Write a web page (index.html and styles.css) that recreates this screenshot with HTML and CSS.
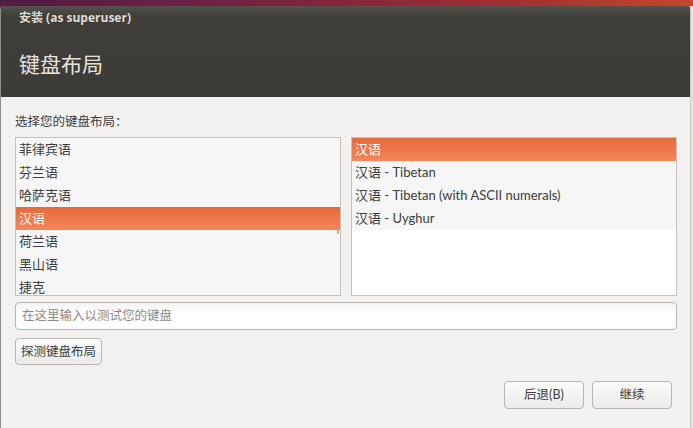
FILE: index.html
```html
<!DOCTYPE html>
<html lang="zh-CN">
<head>
<meta charset="utf-8">
<link rel="stylesheet" href="styles.css">
</head>
<body>
<div class="desktop">
  <div class="window">
    <div class="titlebar">
      <div class="wm-title">安装 (as superuser)</div>
      <h1 class="page-title">键盘布局</h1>
    </div>
    <div class="content">
      <div class="label">选择您的键盘布局：</div>
      <div class="lists">
        <div class="list list-left">
          <div class="row">菲律宾语</div>
          <div class="row">芬兰语</div>
          <div class="row">哈萨克语</div>
          <div class="row selected">汉语</div>
          <div class="row">荷兰语</div>
          <div class="row">黑山语</div>
          <div class="row">捷克</div>
          <div class="scroll-ind"></div>
        </div>
        <div class="list">
          <div class="row selected">汉语</div>
          <div class="row">汉语 - Tibetan</div>
          <div class="row">汉语 - Tibetan (with ASCII numerals)</div>
          <div class="row">汉语 - Uyghur</div>
        </div>
      </div>
      <div class="entry">在这里输入以测试您的键盘</div>
      <div class="detect-row"><div class="btn">探测键盘布局</div></div>
      <div class="actions">
        <div class="btn wide">后退(B)</div>
        <div class="btn wide">继续</div>
      </div>
    </div>
  </div>
  <div class="side"></div>
</div>
</body>
</html>
```
FILE: styles.css
```css
html, body {
  margin: 0;
  padding: 0;
  width: 693px;
  height: 428px;
  overflow: hidden;
  font-family: "Lato", "Noto Sans CJK SC", sans-serif;
  color: #3c3c3c;
}
.desktop {
  display: flex;
  height: 428px;
  padding-top: 6px;
  box-sizing: border-box;
  background: linear-gradient(90deg, #4e1c45 0%, #7a2340 40%, #a3302f 75%, #c4482c 100%);
}
.window {
  width: 690px;
  display: flex;
  flex-direction: column;
  border-left: 1px solid #8f8d89;
  box-sizing: border-box;
  border-radius: 4px 4px 0 0;
  overflow: hidden;
}
.side {
  width: 3px;
  background: #e4e2df;
  border-left: 1px solid #c9c7c4;
  box-sizing: border-box;
}
.titlebar {
  height: 91px;
  background: linear-gradient(180deg, #55524c 0px, #3f3e3a 10px, #3c3b37 100%);
  color: #dfdbd2;
  padding-left: 18px;
  box-sizing: border-box;
}
.wm-title {
  font-family: "Open Sans", "Noto Sans CJK SC", sans-serif;
  font-size: 12px;
  font-weight: bold;
  line-height: 14px;
  padding-top: 5px;
  color: #dfdbd2;
}
.page-title {
  margin: 0;
  margin-top: 26px;
  font-size: 21px;
  font-weight: normal;
  line-height: 26px;
  color: #e6e3dd;
}
.content {
  flex: 1;
  background: #f2f1f0;
  padding: 17px 13px 0 14px;
  display: flex;
  flex-direction: column;
}
.label {
  font-size: 12.5px;
  line-height: 16px;
  color: #3c3c3c;
}
.lists {
  display: flex;
  gap: 10px;
  margin-top: 7px;
}
.list {
  position: relative;
  flex: 1;
  height: 159px;
  border: 1px solid #c6c3bf;
  background: #ffffff;
  overflow: hidden;
  box-sizing: border-box;
}
.list-left {
  background: #f6f6f6;
}
.row {
  height: 23px;
  line-height: 23px;
  font-size: 13px;
  padding-left: 3px;
  background: #f6f6f6;
  color: #3c3c3c;
  white-space: nowrap;
}
.list .row.selected {
  background: linear-gradient(180deg, #e8693a 0%, #f4875a 100%);
  color: #ffffff;
}
.scroll-ind {
  position: absolute;
  right: 1px;
  top: 92px;
  width: 2px;
  height: 4px;
  background: #f0a27f;
}
.entry {
  margin-top: 6px;
  height: 28px;
  border: 1px solid #b8b5b0;
  border-radius: 4px;
  background: linear-gradient(180deg, #f4f4f4 0%, #ffffff 40%);
  box-sizing: border-box;
  font-size: 12.5px;
  line-height: 26px;
  padding-left: 6px;
  color: #8c8a86;
}
.detect-row {
  display: flex;
  margin-top: 8px;
}
.btn {
  height: 27px;
  border: 1px solid #b9b6b1;
  border-radius: 4px;
  background: linear-gradient(180deg, #fbfbfa 0%, #ecebe9 100%);
  box-sizing: border-box;
  font-size: 12.5px;
  line-height: 25px;
  padding: 0 5px;
  color: #3c3c3c;
  text-align: center;
}
.actions {
  display: flex;
  justify-content: flex-end;
  gap: 8px;
  margin-top: 16px;
  padding-right: 5px;
}
.btn.wide {
  width: 80px;
  height: 28px;
  line-height: 26px;
}
```
